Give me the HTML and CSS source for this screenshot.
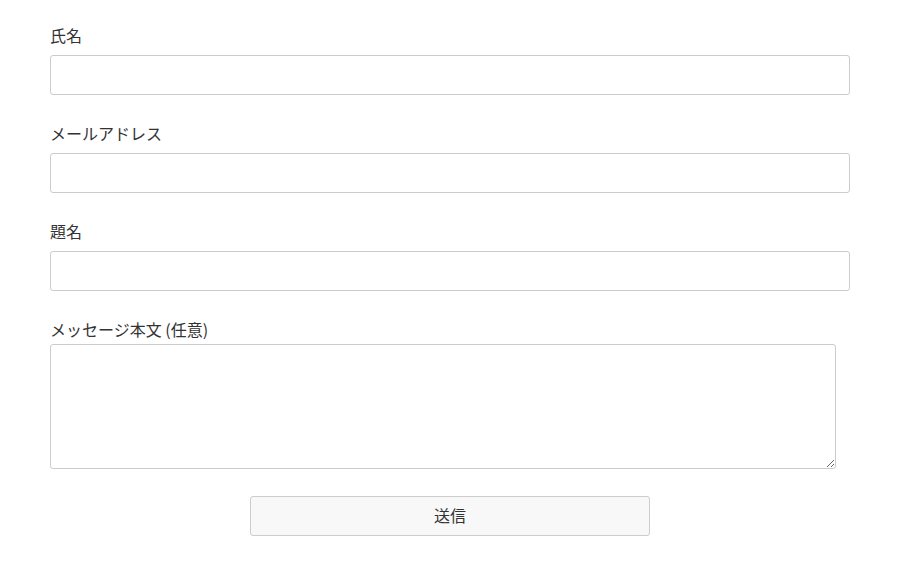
FILE: index.html
```html
<!DOCTYPE html>
<html lang="ja">
<head>
<meta charset="utf-8">
<title>お問い合わせ</title>
<link rel="stylesheet" href="styles.css">
</head>
<body>
<form class="form">
  <div class="field">
    <label class="label">氏名</label>
    <input class="input" type="text">
  </div>
  <div class="field">
    <label class="label">メールアドレス</label>
    <input class="input" type="email">
  </div>
  <div class="field">
    <label class="label">題名</label>
    <input class="input" type="text">
  </div>
  <div class="field">
    <label class="label label-tight">メッセージ本文 (任意)</label>
    <textarea class="textarea"></textarea>
  </div>
  <div class="actions">
    <button class="button" type="button">送信</button>
  </div>
</form>
</body>
</html>
```
FILE: styles.css
```css
html, body {
  margin: 0;
  padding: 0;
  background: #fff;
}
body {
  font-family: "Noto Sans CJK JP", "Noto Sans", sans-serif;
  color: #333;
  font-size: 16px;
}
.form {
  padding: 25px 50px 0;
  display: flex;
  flex-direction: column;
}
.field {
  display: flex;
  flex-direction: column;
  margin-bottom: 28px;
}
.label {
  display: block;
  height: 24px;
  line-height: 20px;
  margin-bottom: 6px;
}
.label-tight {
  margin-bottom: 1px;
}
.input {
  box-sizing: border-box;
  width: 800px;
  height: 40px;
  border: 1px solid #ccc;
  border-radius: 3px;
  padding: 0 10px;
  font: inherit;
  background: #fff;
}
.textarea {
  box-sizing: border-box;
  width: 786px;
  height: 125px;
  border: 1px solid #ccc;
  border-radius: 3px;
  padding: 6px 10px;
  font: inherit;
  background: #fff;
  margin: 0;
}
.actions {
  display: flex;
  justify-content: center;
  width: 800px;
  margin-top: -1px;
}
.button {
  box-sizing: border-box;
  width: 400px;
  height: 40px;
  border: 1px solid #ccc;
  border-radius: 3px;
  background: #f8f8f8;
  color: #333;
  font: inherit;
  font-size: 16px;
  padding: 0 0 2px;
}
```
